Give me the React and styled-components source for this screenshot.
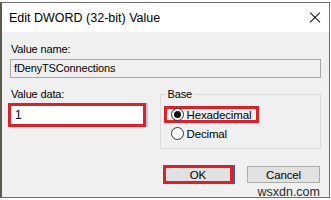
import React from 'react';
import styled, { createGlobalStyle } from 'styled-components';

const Global = createGlobalStyle`
    html, body {
        margin: 0;
        padding: 0;
        background: #ffffff;
    }
    body {
        font-family: 'Liberation Sans', Arial, sans-serif;
        color: #000;
    }
`;

// 바깥 화면
const Screen = styled.div`
    width: 331px;
    height: 200px;
    padding-top: 2px;
    box-sizing: border-box;
    overflow: hidden;
`;

// 대화상자 창
const Window = styled.div`
    width: 330px;
    height: 196px;
    box-sizing: border-box;
    border: 1px solid #6f6f6f;
    border-left: 2px solid #5a5a4f;
    background: #f0f0f0;
    display: flex;
    flex-direction: column;
    position: relative;
`;

const TitleBar = styled.div`
    position: relative;
    z-index: 2;
    height: 29px;
    flex-shrink: 0;
    background: #ffffff;
    display: flex;
    align-items: center;
    padding: 0 8px 0 7px;
    font-size: 12.5px;
`;

const Title = styled.span`
    flex: 1;
`;

// 닫기 버튼 (X)
const Close = styled.span`
    position: relative;
    z-index: 3;
    display: block;
    width: 12px;
    height: 12px;
    flex-shrink: 0;
    background: #ffffff;

    &::before,
    &::after {
        content: '';
        position: absolute;
        left: -1px;
        top: 5.5px;
        width: 14px;
        height: 1.2px;
        background: #111111;
        transform: rotate(45deg);
    }
    &::after {
        transform: rotate(-45deg);
    }
`;

const Body = styled.div`
    flex: 1;
    padding: 0 8px;
    display: flex;
    flex-direction: column;
    font-size: 11px;
    letter-spacing: -0.15px;
`;

const Label = styled.div`
    line-height: 16px;
    margin-top: ${p => p.$top}px;
    padding-left: 1px;
`;

const NameBox = styled.div`
    margin-top: 2px;
    height: 19px;
    width: 311px;
    box-sizing: border-box;
    border: 1px solid #a8a8a8;
    background: #f0f0f0;
    padding-left: 3px;
    line-height: 17px;
`;

const Row = styled.div`
    display: flex;
    margin-top: 4px;
`;

const LeftCol = styled.div`
    width: 150px;
    display: flex;
    flex-direction: column;
`;

const DataBox = styled.div`
    margin-top: 1px;
    margin-left: -2px;
    width: 138px;
    height: 24px;
    box-sizing: border-box;
    border: 3px solid #d9222b;
    background: #ffffff;
    padding-left: 4px;
    line-height: 18px;
    font-size: 12px;
    box-shadow: 2px 0 0 #b9c6d6;
`;

const Group = styled.fieldset`
    margin: 5px 0 0 0;
    width: 162px;
    height: 62px;
    box-sizing: border-box;
    border: 1px solid #dcdcdc;
    padding: 5px 0 0 3px;
    display: flex;
    flex-direction: column;
    gap: 2px;
`;

const Legend = styled.legend`
    padding: 0 2px;
    margin-left: 2px;
    line-height: 14px;
`;

const Option = styled.label`
    display: flex;
    align-items: center;
    gap: 3px;
    width: 95px;
    height: 17px;
    box-sizing: border-box;
    padding-left: 4px;
    border: 3px solid ${p => (p.$marked ? '#d9222b' : 'transparent')};
    font-size: 11.5px;
`;

const Radio = styled.span`
    width: 13px;
    height: 13px;
    box-sizing: border-box;
    border-radius: 50%;
    border: 1px solid #333;
    background: #fff;
    display: flex;
    align-items: center;
    justify-content: center;
    flex-shrink: 0;

    &::after {
        content: '';
        width: 7px;
        height: 7px;
        border-radius: 50%;
        background: ${p => (p.$checked ? '#111' : 'transparent')};
    }
`;

const Buttons = styled.div`
    display: flex;
    align-items: flex-start;
    margin-top: 16px;
    padding-left: 153px;
    gap: 14px;
`;

const Button = styled.div`
    width: ${p => p.$w}px;
    height: ${p => p.$h}px;
    box-sizing: border-box;
    border: ${p => (p.$marked ? '3px solid #d9222b' : '1px solid #adadad')};
    background: #e1e1e1;
    display: flex;
    align-items: center;
    justify-content: center;
    font-size: 11.5px;
    box-shadow: ${p => (p.$marked ? '2px 0 0 #2f5fb5' : 'none')};
    margin-top: ${p => (p.$marked ? 0 : 1)}px;
`;

// 워터마크
const Mark = styled.div`
    position: absolute;
    right: 9px;
    bottom: -2px;
    font-size: 12.5px;
    color: #2b2b2b;
    line-height: 13px;
`;

const App = () => (
    <Screen>
        <Global />
        <Window>
            <TitleBar>
                <Title>Edit DWORD (32-bit) Value</Title>
                <Close />
            </TitleBar>
            <Body>
                <Label $top={9}>Value name:</Label>
                <NameBox>fDenyTSConnections</NameBox>
                <Row>
                    <LeftCol>
                        <Label $top={4}>Value data:</Label>
                        <DataBox>1</DataBox>
                    </LeftCol>
                    <Group>
                        <Legend>Base</Legend>
                        <Option $marked>
                            <Radio $checked />
                            Hexadecimal
                        </Option>
                        <Option>
                            <Radio />
                            Decimal
                        </Option>
                    </Group>
                </Row>
                <Buttons>
                    <Button $marked $w={70} $h={19}>OK</Button>
                    <Button $w={73} $h={17}>Cancel</Button>
                </Buttons>
            </Body>
            <Mark>wsxdn.com</Mark>
        </Window>
    </Screen>
);

export default App;
